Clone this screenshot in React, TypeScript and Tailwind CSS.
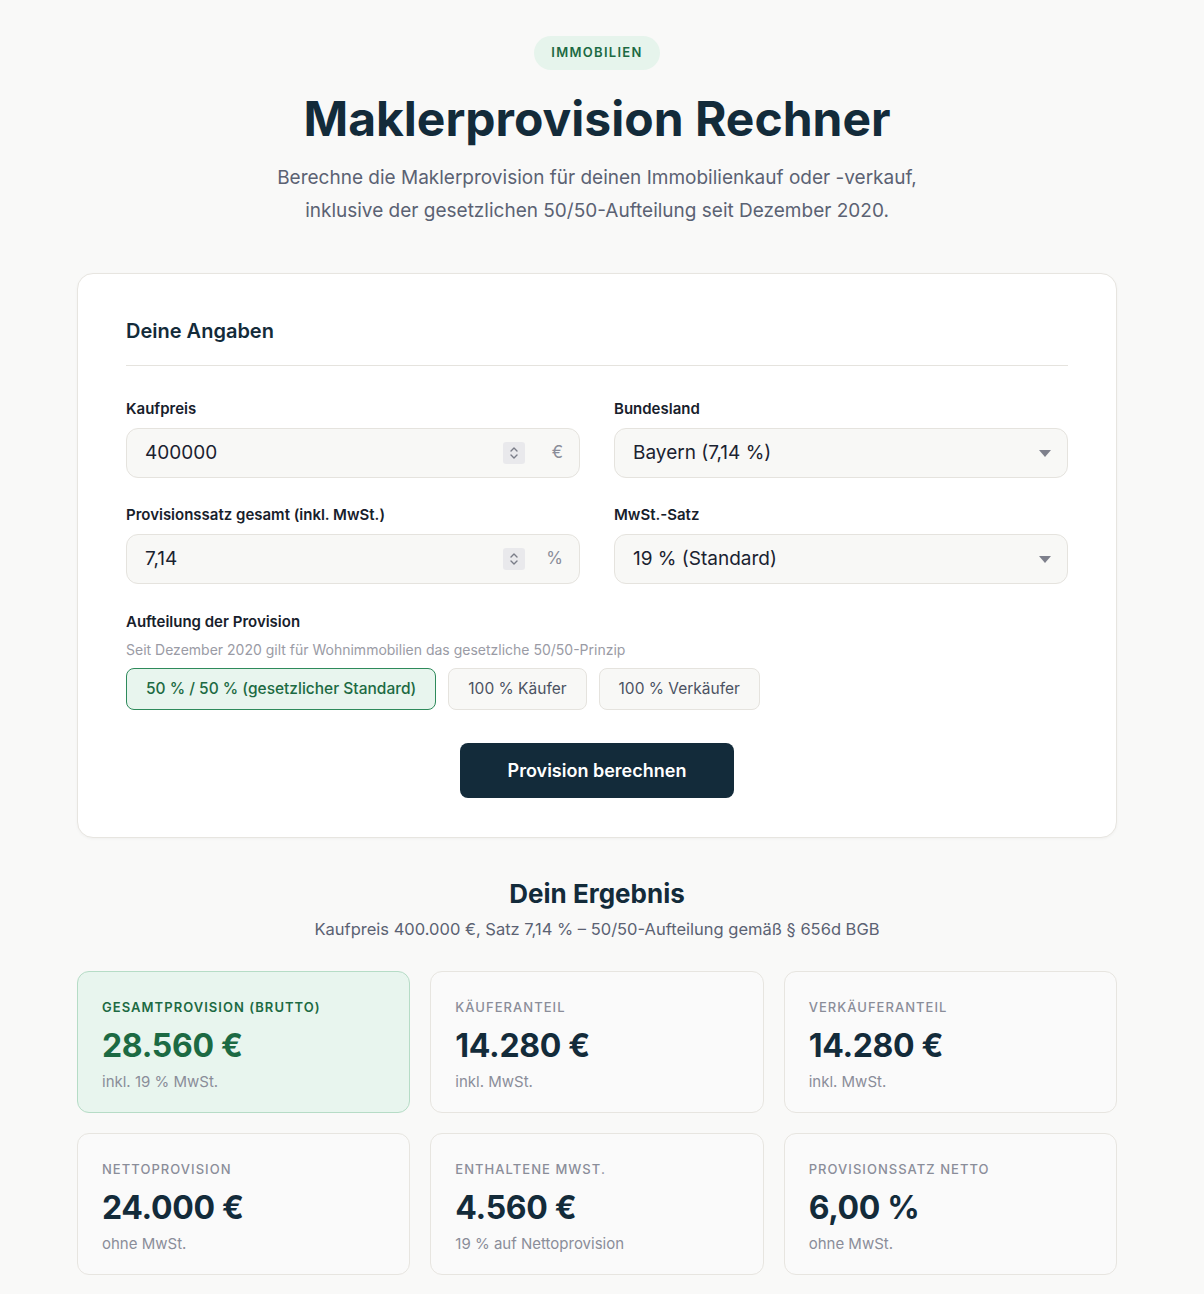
import React, { useState } from 'react';

const SPLITS = [
  { id: 'half', label: '50 % / 50 % (gesetzlicher Standard)' },
  { id: 'buyer', label: '100 % Käufer' },
  { id: 'seller', label: '100 % Verkäufer' },
];

const RESULTS = [
  { label: 'Gesamtprovision (brutto)', value: '28.560 €', note: 'inkl. 19 % MwSt.', highlight: true },
  { label: 'Käuferanteil', value: '14.280 €', note: 'inkl. MwSt.' },
  { label: 'Verkäuferanteil', value: '14.280 €', note: 'inkl. MwSt.' },
  { label: 'Nettoprovision', value: '24.000 €', note: 'ohne MwSt.' },
  { label: 'Enthaltene MwSt.', value: '4.560 €', note: '19 % auf Nettoprovision' },
  { label: 'Provisionssatz netto', value: '6,00 %', note: 'ohne MwSt.' },
];

const Spinner = () => (
  <div className="w-[22px] h-[22px] rounded-[3px] bg-[#e9e9ec] flex items-center justify-center">
    <svg width="10" height="16" viewBox="0 0 10 16" fill="none" stroke="#7a7d88" strokeWidth="1.4" strokeLinecap="round" strokeLinejoin="round">
      <path d="M2 6 L5 3 L8 6" />
      <path d="M2 10 L5 13 L8 10" />
    </svg>
  </div>
);

const NumberField = ({ label, value, suffix }: { label: string; value: string; suffix: string }) => (
  <div className="flex flex-col gap-[9px]">
    <label className="text-[15px] font-semibold text-[#17202b] leading-5">{label}</label>
    <div className="h-[50px] rounded-xl border border-[#e5e3de] bg-[#f8f8f6] flex items-center pl-[18px] pr-[16px]">
      <input
        type="text"
        defaultValue={value}
        className="flex-1 bg-transparent outline-none text-[19px] text-[#1a2230]"
      />
      <Spinner />
      <span className="w-[38px] text-right text-[17px] text-[#8a8d99]">{suffix}</span>
    </div>
  </div>
);

const SelectField = ({ label, value }: { label: string; value: string }) => (
  <div className="flex flex-col gap-[9px]">
    <label className="text-[15px] font-semibold text-[#17202b] leading-5">{label}</label>
    <div className="relative h-[50px] rounded-xl border border-[#e5e3de] bg-[#f8f8f6]">
      <select
        defaultValue={value}
        className="appearance-none w-full h-full bg-transparent outline-none pl-[18px] pr-10 text-[19px] text-[#1a2230]"
      >
        <option>{value}</option>
      </select>
      <svg className="absolute right-[16px] top-[21px] pointer-events-none" width="12" height="7" viewBox="0 0 12 7">
        <path d="M0 0 H12 L6 7 Z" fill="#7e808c" />
      </svg>
    </div>
  </div>
);

export default function App() {
  const [split, setSplit] = useState('half');

  return (
    <div className="min-h-screen bg-[#f9f9f8] font-['Inter',sans-serif] text-[#132b3a] pr-[10px]">
      <div className="max-w-[1040px] mx-auto pt-9 pb-5">
        {/* Header */}
        <div className="flex flex-col items-center text-center">
          <span className="h-[34px] px-[17px] rounded-full bg-[#e6f4ec] text-[#1c6a43] text-[13px] font-semibold tracking-[0.1em] flex items-center">
            IMMOBILIEN
          </span>
          <h1 className="mt-[21px] text-[48px] leading-[56px] font-bold tracking-[0] text-[#132b3a]">
            Maklerprovision Rechner
          </h1>
          <p className="mt-[14px] text-[19px] leading-[33px] text-[#5b6273] max-w-[660px]">
            Berechne die Maklerprovision für deinen Immobilienkauf oder -verkauf, inklusive der gesetzlichen 50/50-Aufteilung seit Dezember 2020.
          </p>
        </div>

        {/* Input card */}
        <div className="mt-[46px] bg-white rounded-2xl border border-[#e7e5e0] shadow-[0_1px_3px_rgba(0,0,0,0.04)] px-12 pt-[43px] pb-[39px]">
          <h2 className="text-[20px] font-semibold text-[#132b3a] leading-7">Deine Angaben</h2>
          <div className="mt-[20px] border-t border-[#e5e3de]" />

          <div className="mt-[33px] grid grid-cols-2 gap-x-[34px] gap-y-[27px]">
            <NumberField label="Kaufpreis" value="400000" suffix="€" />
            <SelectField label="Bundesland" value="Bayern (7,14 %)" />
            <NumberField label="Provisionssatz gesamt (inkl. MwSt.)" value="7,14" suffix="%" />
            <SelectField label="MwSt.-Satz" value="19 % (Standard)" />
          </div>

          <div className="mt-[28px]">
            <div className="text-[15px] font-semibold text-[#17202b] leading-5">Aufteilung der Provision</div>
            <div className="mt-[8px] text-[14px] text-[#9a9ba5] leading-5">
              Seit Dezember 2020 gilt für Wohnimmobilien das gesetzliche 50/50-Prinzip
            </div>
            <div className="mt-[8px] flex gap-3">
              {SPLITS.map((s) => (
                <button
                  key={s.id}
                  onClick={() => setSplit(s.id)}
                  className={
                    split === s.id
                      ? 'h-[42px] px-[19px] rounded-lg border border-[#2e8a5b] bg-[#e8f5ee] text-[#1c6a43] text-[15.5px] font-medium'
                      : 'h-[42px] px-[19px] rounded-lg border border-[#e5e3de] bg-[#f8f8f6] text-[#4b5262] text-[15.5px]'
                  }
                >
                  {s.label}
                </button>
              ))}
            </div>
          </div>

          <div className="mt-[33px] flex justify-center">
            <button className="h-[55px] w-[274px] rounded-lg bg-[#132b3a] text-white text-[18px] font-semibold">
              Provision berechnen
            </button>
          </div>
        </div>

        {/* Results */}
        <div className="mt-[40px] text-center">
          <h2 className="text-[26px] leading-8 font-bold text-[#132b3a]">Dein Ergebnis</h2>
          <p className="mt-[7px] text-[16.5px] text-[#5b6273]">
            Kaufpreis 400.000 €, Satz 7,14 % – 50/50-Aufteilung gemäß § 656d BGB
          </p>
        </div>

        <div className="mt-[29px] grid grid-cols-3 gap-5">
          {RESULTS.map((r) => (
            <div
              key={r.label}
              className={
                r.highlight
                  ? 'h-[142px] rounded-xl border border-[#b6dcc6] bg-[#e8f5ee] px-6 pt-[27px]'
                  : 'h-[142px] rounded-xl border border-[#e7e5e0] bg-[#fafafa] px-6 pt-[27px]'
              }
            >
              <div
                className={
                  r.highlight
                    ? 'text-[13px] font-semibold uppercase tracking-[0.08em] text-[#1c6a43] leading-4'
                    : 'text-[13px] font-medium uppercase tracking-[0.08em] text-[#8a8d99] leading-4'
                }
              >
                {r.label}
              </div>
              <div
                className={
                  r.highlight
                    ? 'mt-[11px] text-[32px] leading-[40px] font-bold tracking-[-0.01em] text-[#1c6a43]'
                    : 'mt-[11px] text-[32px] leading-[40px] font-bold tracking-[-0.01em] text-[#132b3a]'
                }
              >
                {r.value}
              </div>
              <div className="mt-[6px] text-[15px] text-[#8a8d99] leading-5">{r.note}</div>
            </div>
          ))}
        </div>
      </div>
    </div>
  );
}
